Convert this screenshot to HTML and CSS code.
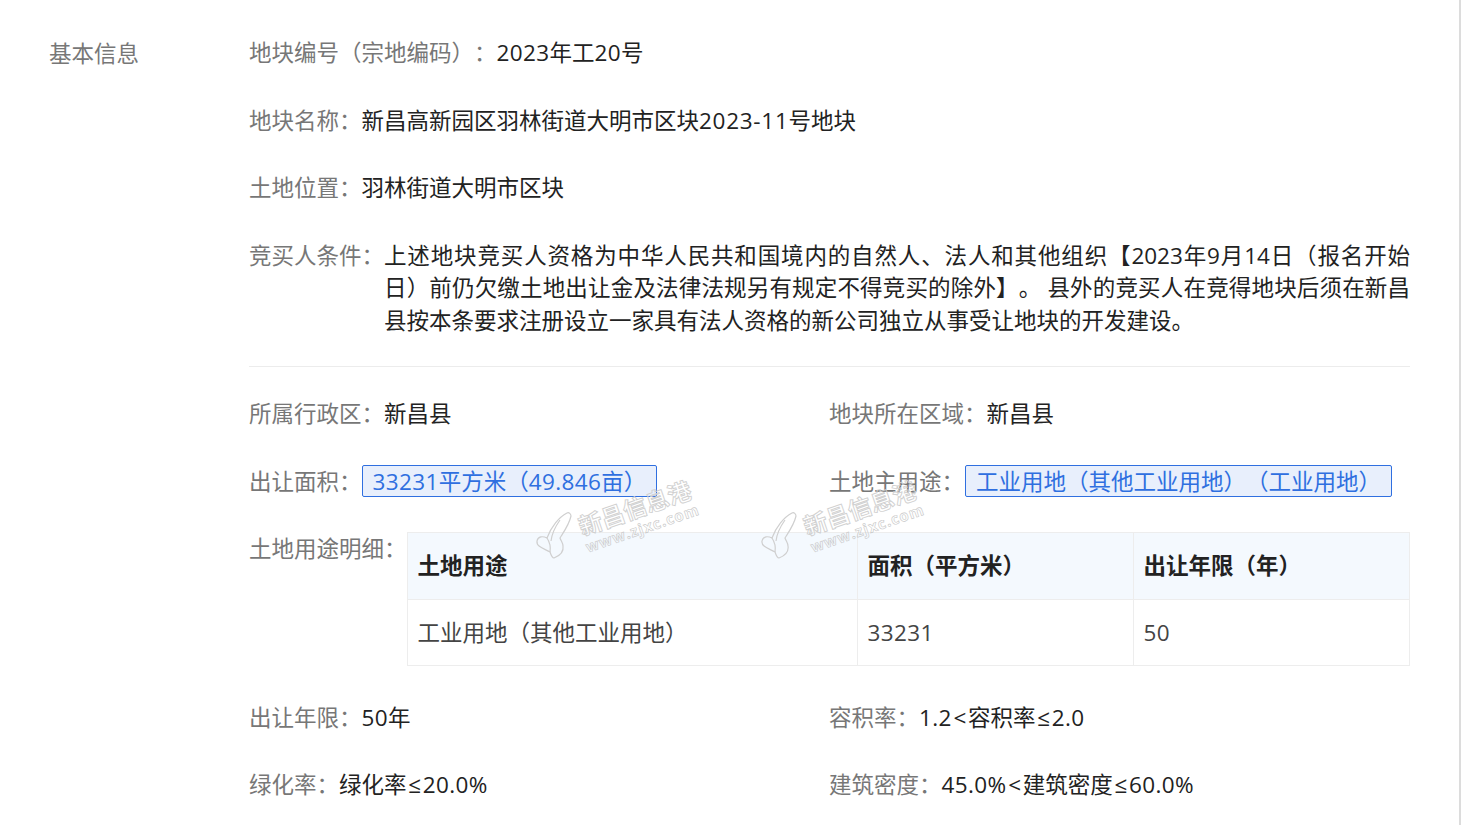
FILE: index.html
```html
<!DOCTYPE html>
<html lang="zh-CN">
<head>
<meta charset="utf-8">
<title>基本信息</title>
<link rel="stylesheet" href="styles.css">
</head>
<body>
<main class="section">
  <h2 class="section-title">基本信息</h2>
  <div class="section-body">
    <div class="row"><span class="label">地块编号（宗地编码）：</span><span class="value"><span class="num">2023</span>年工<span class="num">20</span>号</span></div>
    <div class="row"><span class="label">地块名称：</span><span class="value">新昌高新园区羽林街道大明市区块<span class="num num-wide">2023-11</span>号地块</span></div>
    <div class="row"><span class="label">土地位置：</span><span class="value">羽林街道大明市区块</span></div>
    <div class="row row-last"><span class="label">竞买人条件：</span><span class="value value-long">上述地块竞买人资格为中华人民共和国境内的自然人、法人和其他组织【2023年9月14日（报名开始日）前仍欠缴土地出让金及法律法规另有规定不得竞买的除外】。 县外的竞买人在竞得地块后须在新昌县按本条要求注册设立一家具有法人资格的新公司独立从事受让地块的开发建设。</span></div>
    <hr class="divider">
    <div class="grid">
      <div class="row"><span class="label">所属行政区：</span><span class="value">新昌县</span></div>
      <div class="row"><span class="label">地块所在区域：</span><span class="value">新昌县</span></div>
      <div class="row row-tag"><span class="label">出让面积：</span><span class="value"><span class="tag"><span class="num">33231</span>平方米（<span class="num">49.846</span>亩）</span></span></div>
      <div class="row row-tag"><span class="label">土地主用途：</span><span class="value"><span class="tag tag-use">工业用地（其他工业用地）（工业用地）</span></span></div>
    </div>
    <div class="row row-table">
      <span class="label label-table">土地用途明细：</span>
      <table class="detail">
        <colgroup><col class="col-a"><col class="col-b"><col class="col-c"></colgroup>
        <thead><tr><th>土地用途</th><th>面积（平方米）</th><th>出让年限（年）</th></tr></thead>
        <tbody><tr><td>工业用地（其他工业用地）</td><td><span class="num">33231</span></td><td><span class="num">50</span></td></tr></tbody>
      </table>
    </div>
    <div class="grid grid-last">
      <div class="row"><span class="label">出让年限：</span><span class="value"><span class="num">50</span>年</span></div>
      <div class="row"><span class="label">容积率：</span><span class="value"><span class="num">1.2</span><span class="op">&lt;</span>容积率<span class="op">≤</span><span class="num">2.0</span></span></div>
      <div class="row"><span class="label">绿化率：</span><span class="value">绿化率<span class="op">≤</span><span class="num">20.0%</span></span></div>
      <div class="row"><span class="label">建筑密度：</span><span class="value"><span class="num">45.0%</span><span class="op">&lt;</span>建筑密度<span class="op">≤</span><span class="num">60.0%</span></span></div>
    </div>
  </div>
</main>

<div class="wm wm-one" aria-hidden="true">
  <svg class="wm-logo" viewBox="0 0 40 56"><path d="M34 10C26 14 18 24 14 35C10 33 5 33 4 38C3 44 12 46 17 49C18 52 19 55 21 55C26 53 31 49 30 43C30 40 28 38 27 35C30 30 36 22 38 13C38 11 36 9 34 10Z"/><path d="M27 17C22 24 19 30 18 38"/><path d="M14 35C16 38 18 43 17 49"/></svg>
  <div class="wm-text"><span class="wm-cn">新昌信息港</span><span class="wm-en">www.zjxc.com</span></div>
</div>
<div class="wm wm-two" aria-hidden="true">
  <svg class="wm-logo" viewBox="0 0 40 56"><path d="M34 10C26 14 18 24 14 35C10 33 5 33 4 38C3 44 12 46 17 49C18 52 19 55 21 55C26 53 31 49 30 43C30 40 28 38 27 35C30 30 36 22 38 13C38 11 36 9 34 10Z"/><path d="M27 17C22 24 19 30 18 38"/><path d="M14 35C16 38 18 43 17 49"/></svg>
  <div class="wm-text"><span class="wm-cn">新昌信息港</span><span class="wm-en">www.zjxc.com</span></div>
</div>
</body>
</html>
```
FILE: styles.css
```css
* { box-sizing: border-box; }
html, body { margin: 0; padding: 0; height: 100%; overflow: hidden; }
body {
  background: #fff;
  border-right: 2px solid #dcdcdc;
  font-family: "Open Sans", "Noto Sans CJK SC", sans-serif;
  font-size: 22.5px;
  font-weight: 400;
  line-height: 32.5px;
  color: #222;
  text-spacing-trim: space-all;
}
.section { display: flex; padding: 37px 49px 0 49px; }
.section-title { margin: 1px 0 0; width: 200px; flex: none; font-size: 22.5px; font-weight: 400; color: #777; line-height: 32.5px; }
.section-body { width: 1161px; flex: none; }
.row { display: flex; margin-bottom: 35px; }
.label { flex: none; color: #777; }
.label-table { padding-top: 1px; }
.value { flex: 1; min-width: 0; }
.value-long { text-align: justify; }
.num { letter-spacing: .38px; }
.num-wide { letter-spacing: .72px; }
.op { margin: 0 1.7px; }
.row-last { margin-bottom: 29px; }
.divider { border: 0; border-top: 1px solid #ececec; margin: 0 0 31px; }
.grid { display: grid; grid-template-columns: 580px 581px; }
.grid-last .row { margin-bottom: 34.5px; }
.row-tag { margin-bottom: 34px; }
.tag {
  display: inline-block;
  height: 32px;
  margin-top: -1px;
  vertical-align: top;
  line-height: 32px;
  padding: 0 10px;
  background: #e8effc;
  border: 1px solid #2f6fe0;
  border-radius: 2px;
  color: #2f6fe0;
}
.tag-use { margin-left: 1px; }
.row-table { margin-bottom: 36px; }
.detail { flex: none; width: 1002px; border-collapse: collapse; table-layout: fixed; }
.col-a { width: 450px; }
.col-b { width: 276px; }
.col-c { width: 276px; }
.detail th, .detail td { border: 1px solid #ededed; padding: 0 10px; height: 66.5px; text-align: left; color: #444; }
.detail td { padding-top: 2px; }
.detail th { background: #f4f9fe; font-weight: 700; color: #222; }
.wm { position: absolute; top: 470px; width: 170px; height: 96px; pointer-events: none; }
.wm-one { left: 533px; }
.wm-two { left: 758px; }
.wm-logo { position: absolute; left: 0; top: 33px; width: 40px; height: 56px; fill: none; stroke: #cfcfcf; stroke-width: 1.2; }
.wm-text { position: absolute; left: 42px; top: 45px; transform: rotate(-19deg); transform-origin: left top; display: flex; flex-direction: column; }
.wm-cn { font-size: 23.5px; line-height: 26px; white-space: nowrap; color: transparent; -webkit-text-stroke: .9px #d0d0d0; font-weight: 700; }
.wm-en { font-size: 15px; line-height: 16px; white-space: nowrap; color: transparent; -webkit-text-stroke: .6px #c8c8c8; font-weight: 700; letter-spacing: 1px; }
```
